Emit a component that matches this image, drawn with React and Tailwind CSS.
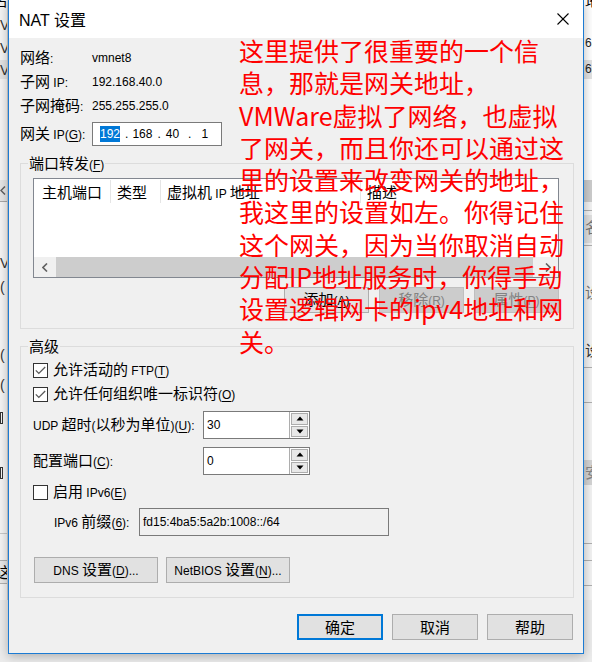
import React from "react";

const CJKC = "font-['Noto_Sans_CJK_SC',sans-serif] text-[15px]";
const LATC = "font-['Liberation_Sans',sans-serif] text-[12px]";

const isCJK = (ch) => /[\u2E80-\u9FFF\u3000-\u303F\uFF00-\uFFEF]/.test(ch);

function Txt({ s }) {
  const out = [];
  let i = 0;
  let key = 0;
  let buf = "";
  let bufC = null;
  const flush = () => {
    if (buf) {
      out.push(
        <span key={key++} className={bufC ? CJKC : LATC}>
          {buf}
        </span>
      );
      buf = "";
    }
  };
  while (i < s.length) {
    const ch = s[i];
    if (ch === "&") {
      flush();
      const c = s[i + 1];
      out.push(
        <span key={key++} className={(isCJK(c) ? CJKC : LATC) + " underline underline-offset-2"}>
          {c}
        </span>
      );
      i += 2;
      continue;
    }
    const c = isCJK(ch);
    if (buf && c !== bufC) flush();
    bufC = c;
    buf += ch;
    i++;
  }
  flush();
  return <>{out}</>;
}

function Btn({ label, disabled, primary, className }) {
  let st = "border border-[#adadad] bg-[#e1e1e1] text-black";
  if (primary) st = "border-2 border-[#0078d7] bg-[#e1e1e1] text-black";
  if (disabled) st = "border border-[#bfbfbf] bg-[#cccccc] text-[#838383]";
  return (
    <div className={"flex items-center justify-center leading-[18px] h-[26px] " + st + " " + (className || "")}>
      <span>
        <Txt s={label} />
      </span>
    </div>
  );
}

function Check({ checked }) {
  return (
    <div className="w-[15px] h-[15px] border border-[#333333] bg-white flex items-center justify-center shrink-0">
      {checked && (
        <svg width="11" height="9" viewBox="0 0 11 9">
          <polyline points="0.8,4.4 3.8,7.4 10.2,1" fill="none" stroke="#5a5a5a" strokeWidth="1.3" />
        </svg>
      )}
    </div>
  );
}

function Tri({ down }) {
  return (
    <svg width="8" height="5" viewBox="0 0 8 5">
      {down ? <polygon points="0.5,0.5 7.5,0.5 4,4.5" fill="#000" /> : <polygon points="4,0.5 7.5,4.5 0.5,4.5" fill="#000" />}
    </svg>
  );
}

function Spin({ value }) {
  return (
    <div className="w-[107px] h-[28px] border border-[#7a7a7a] bg-white flex">
      <div className="flex-1 pl-[3px] pt-[3px] leading-[16px]">
        <Txt s={value} />
      </div>
      <div className="w-[20px] flex flex-col gap-[1px] p-[1px] bg-[#ffffff] border-l border-[#adadad]">
        <div className="flex-1 bg-[#e8e8e8] border border-[#adadad] flex items-center justify-center">
          <Tri />
        </div>
        <div className="flex-1 bg-[#e8e8e8] border border-[#adadad] flex items-center justify-center">
          <Tri down />
        </div>
      </div>
    </div>
  );
}

function Group({ title, className, children }) {
  return (
    <div className={"relative border border-[#dcdcdc] " + (className || "")}>
      <span className="absolute -top-[10px] left-[7px] px-[1px] bg-[#f0f0f0] leading-[18px] text-black">
        <Txt s={title} />
      </span>
      {children}
    </div>
  );
}

function InfoRow({ label, children, className }) {
  return (
    <div className={"flex items-center h-[24px] leading-[18px] " + (className || "")}>
      <div className="w-[72px]">
        <Txt s={label} />
      </div>
      {children}
    </div>
  );
}

const RED = [
  "这里提供了很重要的一个信",
  "息，那就是网关地址，",
  "VMWare虚拟了网络，也虚拟",
  "了网关，而且你还可以通过这",
  "里的设置来改变网关的地址，",
  "我这里的设置如左。你得记住",
  "这个网关，因为当你取消自动",
  "分配IP地址服务时，你得手动",
  "设置逻辑网卡的ipv4地址和网",
  "关。",
];

function LeftStrip() {
  const t = "absolute font-['Liberation_Sans',sans-serif] text-[14px] leading-[16px] text-[#333]";
  return (
    <div className="absolute left-0 top-0 w-[8px] h-[662px] overflow-hidden bg-[#f4f4f4]">
      <span className={"absolute -left-[7px] -top-[8px] text-[15px] leading-[16px] font-['Noto_Sans_CJK_SC',sans-serif]"}>名</span>
      <span className={t + " left-0 top-[17px]"}>V</span>
      <span className={t + " left-0 top-[40px]"}>V</span>
      <div className="absolute left-0 top-[60px] w-full h-[19px] bg-[#e3e3e3]" />
      <span className={t + " left-0 top-[62px]"}>V</span>
      <div className="absolute left-0 top-[180px] w-full h-[22px] bg-[#e6e6e6] border-b border-[#a8a8a8] flex items-center">
        <svg width="6" height="9" viewBox="0 0 6 9">
          <polyline points="5,0.5 1,4.5 5,8.5" fill="none" stroke="#606060" strokeWidth="1.5" />
        </svg>
      </div>
      <span className={t + " left-0 top-[255px]"}>V</span>
      <span className={t + " left-0 top-[279px] text-[12px]"}>(</span>
      <span className={t + " left-0 top-[347px] text-[12px]"}>(</span>
      <span className={t + " left-0 top-[377px] text-[12px]"}>(</span>
      <div className="absolute left-0 top-[412px] w-[3px] h-[12px] border border-[#333]" />
      <div className="absolute left-0 top-[467px] w-[3px] h-[12px] border border-[#333]" />
      <div className="absolute left-0 top-[533px] w-full h-px bg-[#c8c8c8]" />
      <div className="absolute left-0 top-[560px] w-full h-[24px] bg-[#e9e9e9] border-y border-[#b0b0b0] overflow-hidden">
        <span className="absolute -left-[4px] top-[1px] text-[15px] leading-[20px] font-['Noto_Sans_CJK_SC',sans-serif]">这</span>
      </div>
      <div className="absolute left-0 top-[600px] w-full h-[62px] bg-[#ececec]" />
      <div className="absolute right-0 top-0 w-px h-[600px] bg-[#cfcfcf]" />
    </div>
  );
}

function RightStrip() {
  const t = "absolute font-['Liberation_Sans',sans-serif] text-[12px] leading-[14px] text-[#222]";
  return (
    <div className="absolute right-0 top-0 w-[8px] h-[662px] overflow-hidden bg-[#f3f3f3]">
      <div className="absolute left-0 top-0 w-full h-[180px] bg-white" />
      <span className="absolute left-[1px] -top-[7px] text-[15px] leading-[16px] font-['Noto_Sans_CJK_SC',sans-serif]">地</span>
      <span className={t + " left-[1px] top-[36px]"}>68</span>
      <div className="absolute left-0 top-[60px] w-full h-[19px] bg-[#e3e3e3]" />
      <span className={t + " left-[1px] top-[62px]"}>68</span>
      <div className="absolute left-0 top-[180px] w-full h-[22px] bg-[#cdcdcd]" />
      <div className="absolute left-0 top-[210px] w-full h-px bg-[#b0b0b0]" />
      <div className="absolute left-0 top-[215px] w-full h-[28px] bg-[#e0e0e0]">
        <span className="absolute left-[1px] top-[2px] text-[15px] leading-[20px] text-[#777] font-['Noto_Sans_CJK_SC',sans-serif]">名</span>
      </div>
      <div className="absolute left-0 top-[245px] w-full h-px bg-[#b0b0b0]" />
      <span className="absolute left-[1px] top-[283px] text-[15px] leading-[18px] text-[#777] font-['Noto_Sans_CJK_SC',sans-serif]">设</span>
      <span className="absolute left-[1px] top-[341px] text-[15px] leading-[18px] text-[#333] font-['Noto_Sans_CJK_SC',sans-serif]">设</span>
      <div className="absolute left-0 top-[367px] w-full h-px bg-[#b0b0b0]" />
      <div className="absolute left-0 top-[402px] w-full h-px bg-[#b0b0b0]" />
      <div className="absolute left-0 top-[460px] w-full h-[25px] bg-[#d4d4d4]">
        <span className="absolute left-[1px] top-[2px] text-[15px] leading-[20px] text-[#888] font-['Noto_Sans_CJK_SC',sans-serif]">安</span>
      </div>
      <div className="absolute left-0 top-[543px] w-full h-px bg-[#b0b0b0]" />
      <div className="absolute left-0 top-[560px] w-full h-px bg-[#b0b0b0]" />
      <div className="absolute left-0 top-[585px] w-full h-px bg-[#b0b0b0]" />
      <div className="absolute left-0 top-[600px] w-full h-[62px] bg-[#ececec]" />
    </div>
  );
}

export default function App() {
  return (
    <div className="relative w-[592px] h-[662px] overflow-hidden bg-[#ececec] text-black">
      <LeftStrip />
      <RightStrip />

      {/* Dialog window */}
      <div className="absolute left-[8px] top-0 w-[576px] h-[654px] flex flex-col border-x border-b border-[#1c7bd3] shadow-[0_2px_10px_rgba(0,0,0,0.28)]">
        {/* Title bar */}
        <div className="h-[38px] shrink-0 bg-white flex items-center justify-between pl-[10px] pr-[14px]">
          <div className="leading-[20px] pt-[1px]">
            <span className="font-['Liberation_Sans',sans-serif] text-[16px]">NAT </span>
            <span className="font-['Noto_Sans_CJK_SC',sans-serif] text-[16px]">设置</span>
          </div>
          <svg width="12" height="12" viewBox="0 0 12 12">
            <line x1="0.5" y1="0.5" x2="11.5" y2="11.5" stroke="#000" strokeWidth="1.1" />
            <line x1="11.5" y1="0.5" x2="0.5" y2="11.5" stroke="#000" strokeWidth="1.1" />
          </svg>
        </div>

        {/* Body */}
        <div className="flex-1 bg-[#f0f0f0] flex flex-col pl-[11px] pr-[9px] pt-[8px]">
          <InfoRow label="网络:">
            <Txt s="vmnet8" />
          </InfoRow>
          <InfoRow label="子网 IP:">
            <Txt s="192.168.40.0" />
          </InfoRow>
          <InfoRow label="子网掩码:">
            <Txt s="255.255.255.0" />
          </InfoRow>
          <InfoRow label="网关 IP(&G):" className="mt-[4px]">
            <div className="w-[130px] h-[24px] border border-[#7a7a7a] bg-white flex items-center pl-[7px] leading-[16px]">
              <span className={LATC + " bg-[#0078d7] text-white"}>192</span>
              <span className={LATC + " ml-[5px]"}>.</span>
              <span className={LATC + " ml-[4px]"}>168</span>
              <span className={LATC + " ml-[5px]"}>.</span>
              <span className={LATC + " ml-[5px]"}>40</span>
              <span className={LATC + " ml-[9px]"}>.</span>
              <span className={LATC + " ml-[10px]"}>1</span>
            </div>
          </InfoRow>

          {/* Port forwarding */}
          <Group title="端口转发(&F)" className="mt-[17px] h-[166px] pl-[12px] pr-[14px] pt-[14px]">
            <div className="h-[100px] border border-[#828790] bg-white flex flex-col">
              <div className="h-[25px] flex leading-[18px]">
                <div className="w-[76px] pl-[8px] pt-[4px]">
                  <Txt s="主机端口" />
                </div>
                <div className="w-px h-[23px] mt-[1px] bg-[#e5e5e5]" />
                <div className="w-[49px] pl-[6px] pt-[4px]">
                  <Txt s="类型" />
                </div>
                <div className="w-px h-[23px] mt-[1px] bg-[#e5e5e5]" />
                <div className="w-[199px] pl-[6px] pt-[4px]">
                  <Txt s="虚拟机 IP 地址" />
                </div>
                <div className="w-px h-[23px] mt-[1px] bg-[#e5e5e5]" />
                <div className="flex-1 pl-[6px] pt-[4px]">
                  <Txt s="描述" />
                </div>
              </div>
              <div className="flex-1" />
              <div className="h-[20px] flex bg-[#f0f0f0]">
                <div className="w-[22px] flex items-center justify-center">
                  <svg width="6" height="9" viewBox="0 0 6 9">
                    <polyline points="5,0.5 1,4.5 5,8.5" fill="none" stroke="#606060" strokeWidth="1.6" />
                  </svg>
                </div>
                <div className="w-[477px] bg-[#cdcdcd]" />
                <div className="flex-1 flex items-center justify-center pl-[4px]">
                  <svg width="6" height="9" viewBox="0 0 6 9">
                    <polyline points="1,0.5 5,4.5 1,8.5" fill="none" stroke="#606060" strokeWidth="1.6" />
                  </svg>
                </div>
              </div>
            </div>
            <div className="mt-[9px] flex justify-end gap-[10px]">
              <Btn label="添加(&A)" className="w-[85px]" />
              <Btn label="移除(&R)" disabled className="w-[85px]" />
              <Btn label="属性(&P)" disabled className="w-[85px]" />
            </div>
          </Group>

          {/* Advanced */}
          <Group title="高级" className="mt-[17px] pl-[12px] pt-[11px] pb-[14px]">
            <div className="h-[24px] flex items-center gap-[5px] leading-[18px]">
              <Check checked />
              <span>
                <Txt s="允许活动的 FTP(&T)" />
              </span>
            </div>
            <div className="h-[24px] flex items-center gap-[5px] leading-[18px]">
              <Check checked />
              <span>
                <Txt s="允许任何组织唯一标识符(&O)" />
              </span>
            </div>
            <div className="mt-[5px] h-[28px] flex items-center leading-[18px]">
              <div className="w-[170px]">
                <Txt s="UDP 超时(以秒为单位)(&U):" />
              </div>
              <Spin value="30" />
            </div>
            <div className="mt-[8px] h-[28px] flex items-center leading-[18px]">
              <div className="w-[170px]">
                <Txt s="配置端口(&C):" />
              </div>
              <Spin value="0" />
            </div>
            <div className="mt-[5px] h-[24px] flex items-center gap-[5px] leading-[18px]">
              <Check />
              <span>
                <Txt s="启用 IPv6(&E)" />
              </span>
            </div>
            <div className="mt-[4px] h-[28px] flex items-center leading-[18px] pl-[21px]">
              <div className="w-[85px]">
                <Txt s="IPv6 前缀(&6):" />
              </div>
              <div className="w-[250px] h-[28px] border border-[#7a7a7a] bg-[#f0f0f0] pl-[3px] pt-[3px] leading-[16px]">
                <Txt s="fd15:4ba5:5a2b:1008::/64" />
              </div>
            </div>
            <div className="mt-[21px] flex gap-[8px] pl-[1px]">
              <Btn label="DNS 设置(&D)..." className="w-[124px]" />
              <Btn label="NetBIOS 设置(&N)..." className="w-[124px]" />
            </div>
          </Group>

          <div className="mt-[16px] flex justify-end gap-[9px] pr-[1px]">
            <Btn label="确定" primary className="w-[86px]" />
            <Btn label="取消" className="w-[86px]" />
            <Btn label="帮助" className="w-[86px]" />
          </div>
        </div>
      </div>

      {/* Red annotation over the dialog */}
      <div className="absolute left-[239px] top-[34px] flex flex-col text-[#ff0000] font-['Noto_Sans_CJK_SC',sans-serif] text-[25px] leading-[32.3px] whitespace-nowrap">
        {RED.map((l, i) => (
          <div key={i}>{l}</div>
        ))}
      </div>
    </div>
  );
}
